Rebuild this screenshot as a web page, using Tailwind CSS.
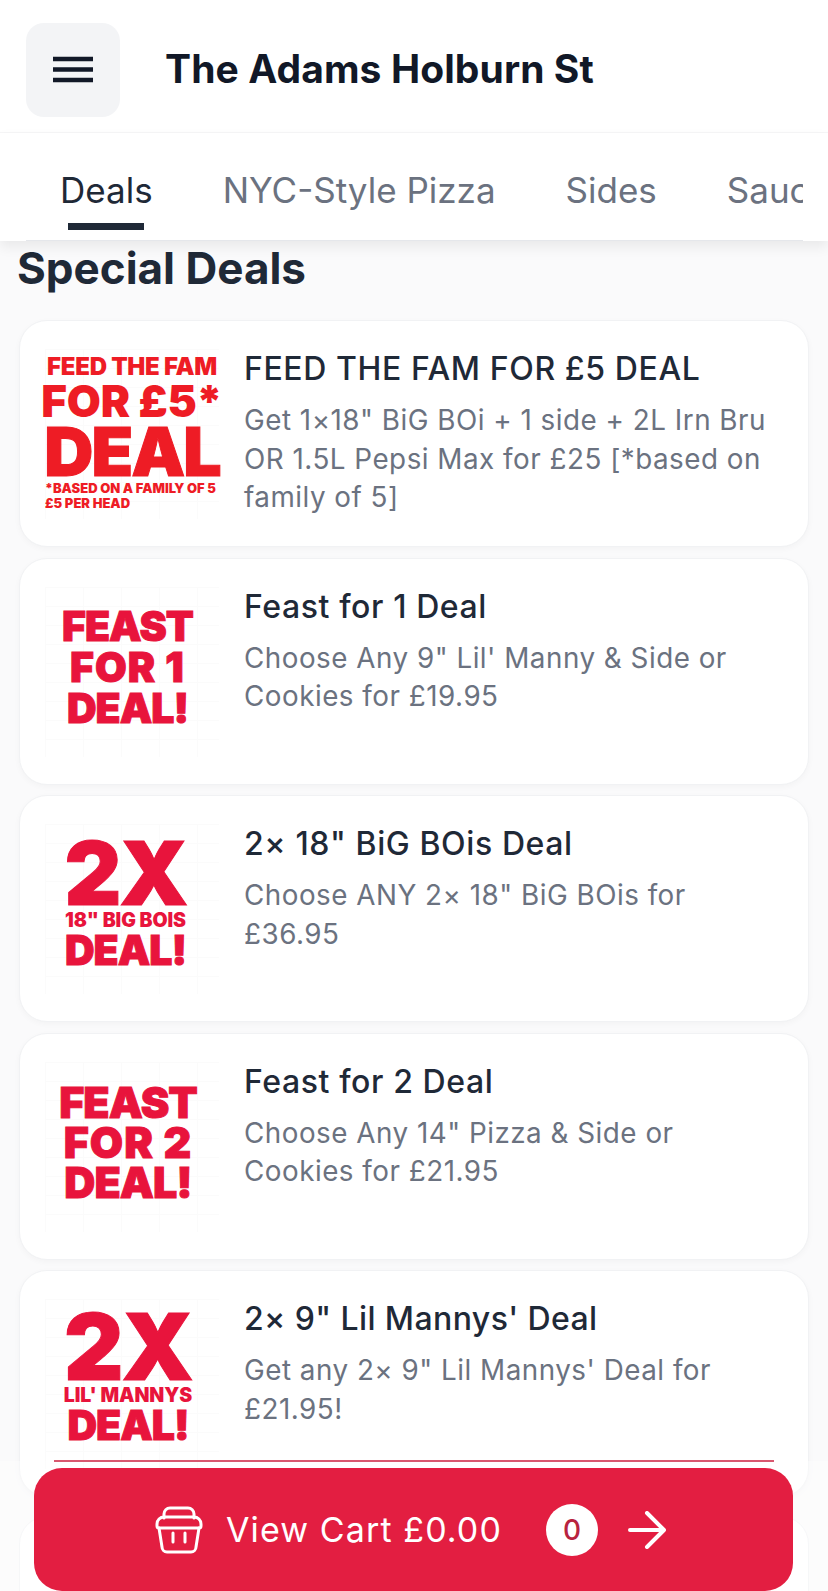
<!DOCTYPE html>
<html><head><meta charset="utf-8"><script src="https://cdn.jsdelivr.net/npm/@tailwindcss/browser@4"></script></head>
<body class="m-0">
<div class="relative w-[828px] h-[1591px] overflow-hidden bg-[#fafafb] font-['Inter','Liberation_Sans',sans-serif]">
  <header class="h-[133px] bg-white flex items-start pt-[23px] pl-[26px] border-b border-[#f6f6f7]">
    <button class="w-[94px] h-[94px] rounded-[18px] bg-[#f3f4f6] flex items-center justify-center">
      <svg width="40" height="28" viewBox="0 0 40 28"><path d="M0 3h40M0 13.500h40M0 24h40" stroke="#111827" stroke-width="4.500"/></svg>
    </button>
    <h1 class="ml-[45px] mt-[24px] text-[39px] leading-[44px] font-bold text-[#111827] tracking-[0.1px]">The Adams Holburn St</h1>
  </header>
  <nav class="relative z-10 h-[108px] bg-white shadow-[0_6px_12px_rgba(0,0,0,0.07)] px-[26px]">
    <div class="h-[108px] w-[777px] overflow-hidden flex text-[35px] leading-[40px] text-[#6b7280] whitespace-nowrap border-b border-[#e5e7eb] pl-[34px] gap-[70px]">
      <div class="relative shrink-0 pt-[37px] text-[#1f2937]">Deals<span class="absolute left-[8px] right-[9px] top-[90px] h-[7px] bg-[#1f2937]"></span></div>
      <div class="shrink-0 pt-[37px]">NYC-Style Pizza</div>
      <div class="shrink-0 pt-[37px]">Sides</div>
      <div class="shrink-0 pt-[37px]">Sauces</div>
    </div>
  </nav>
  <main class="px-[19px]">
    <h2 class="-ml-[2px] h-[79px] pt-[3px] text-[44px] leading-[48px] font-bold text-[#1f2937]">Special Deals</h2>
    <div class="flex flex-col gap-[10.500px]">
      <article class="h-[227px] rounded-[28px] bg-white border border-[#f1f2f4] shadow-[0_2px_6px_rgba(0,0,0,0.03)] flex pl-[25px] pr-[18px]">
        <div class="w-[174px] h-[170px] my-[28px] shrink-0 flex flex-col items-center pt-[5px] font-black text-[#ee1c25] whitespace-nowrap bg-[linear-gradient(#fbfbfb_1px,transparent_1px),linear-gradient(90deg,#fbfbfb_1px,transparent_1px)] bg-[length:38px_19px]">
          <div class="text-[24px] leading-[26px] tracking-[-0.3px]">FEED THE FAM</div>
          <div class="text-[44px] leading-[40px] mt-[1px] tracking-[-0.2px]">FOR £5*</div>
          <div class="text-[68px] leading-[54px] mt-[3px] tracking-[-2px] [-webkit-text-stroke:1px_#ee1c25]">DEAL</div>
          <div class="w-full text-[13px] leading-[15px] mt-[3px] tracking-[0px]">*BASED ON A FAMILY OF 5</div>
          <div class="w-full text-[13px] leading-[15px] tracking-[0px]">£5 PER HEAD</div>
        </div>
        <div class="ml-[25px] pt-[26px]">
          <h3 class="text-[32px] leading-[44px] font-[550] text-[#1f2937] tracking-[0.6px]">FEED THE FAM FOR £5 DEAL</h3>
          <p class="mt-[10px] text-[27.800px] leading-[38.500px] text-[#6b7280] tracking-[0.5px]">Get 1×18" BiG BOi + 1 side + 2L Irn Bru OR 1.5L Pepsi Max for £25 [*based on family of 5]</p>
        </div>
      </article>
      <article class="h-[227px] rounded-[28px] bg-white border border-[#f1f2f4] shadow-[0_2px_6px_rgba(0,0,0,0.03)] flex pl-[25px] pr-[18px]">
        <div class="w-[174px] h-[170px] my-[28px] shrink-0 flex flex-col items-center pt-[19px] pr-[9px] font-black text-[#e8143c] whitespace-nowrap text-[41px] leading-[41px] tracking-[-1px] [-webkit-text-stroke:1px_#e8143c] bg-[linear-gradient(#fbfbfb_1px,transparent_1px),linear-gradient(90deg,#fbfbfb_1px,transparent_1px)] bg-[length:38px_19px]">
          <div>FEAST</div><div class="tracking-[1px]">FOR 1</div><div>DEAL!</div>
        </div>
        <div class="ml-[25px] pt-[26px]">
          <h3 class="text-[32px] leading-[44px] font-[550] text-[#1f2937] tracking-[0.6px]">Feast for 1 Deal</h3>
          <p class="mt-[10px] text-[27.800px] leading-[38.500px] text-[#6b7280] tracking-[0.5px]">Choose Any 9" Lil' Manny &amp; Side or Cookies for £19.95</p>
        </div>
      </article>
      <article class="h-[227px] rounded-[28px] bg-white border border-[#f1f2f4] shadow-[0_2px_6px_rgba(0,0,0,0.03)] flex pl-[25px] pr-[18px]">
        <div class="w-[174px] h-[170px] my-[28px] shrink-0 flex flex-col items-center pt-[13px] pr-[13px] font-black text-[#e8143c] whitespace-nowrap [-webkit-text-stroke:1px_#e8143c] bg-[linear-gradient(#fbfbfb_1px,transparent_1px),linear-gradient(90deg,#fbfbfb_1px,transparent_1px)] bg-[length:38px_19px]">
          <div class="text-[88px] leading-[73px] tracking-[-2px]">2X</div>
          <div class="text-[19.500px] leading-[21px] tracking-[-0.1px] [-webkit-text-stroke:0]">18" BIG BOIS</div>
          <div class="text-[41px] leading-[38px] tracking-[-1px]">DEAL!</div>
        </div>
        <div class="ml-[25px] pt-[26px] pr-[90px]">
          <h3 class="text-[32px] leading-[44px] font-[550] text-[#1f2937] tracking-[0.6px] whitespace-nowrap">2× 18" BiG BOis Deal</h3>
          <p class="mt-[10px] text-[27.800px] leading-[38.500px] text-[#6b7280] tracking-[0.5px]">Choose ANY 2× 18" BiG BOis for £36.95</p>
        </div>
      </article>
      <article class="h-[227px] rounded-[28px] bg-white border border-[#f1f2f4] shadow-[0_2px_6px_rgba(0,0,0,0.03)] flex pl-[25px] pr-[18px]">
        <div class="w-[174px] h-[170px] my-[28px] shrink-0 flex flex-col items-center pt-[20px] pr-[8px] font-black text-[#e8143c] whitespace-nowrap text-[43px] leading-[40px] tracking-[-1px] [-webkit-text-stroke:1px_#e8143c] bg-[linear-gradient(#fbfbfb_1px,transparent_1px),linear-gradient(90deg,#fbfbfb_1px,transparent_1px)] bg-[length:38px_19px]">
          <div>FEAST</div><div class="tracking-[1px]">FOR 2</div><div>DEAL!</div>
        </div>
        <div class="ml-[25px] pt-[26px] pr-[90px]">
          <h3 class="text-[32px] leading-[44px] font-[550] text-[#1f2937] tracking-[0.6px] whitespace-nowrap">Feast for 2 Deal</h3>
          <p class="mt-[10px] text-[27.800px] leading-[38.500px] text-[#6b7280] tracking-[0.5px]">Choose Any 14" Pizza &amp; Side or Cookies for £21.95</p>
        </div>
      </article>
      <article class="h-[227px] rounded-[28px] bg-white border border-[#f1f2f4] shadow-[0_2px_6px_rgba(0,0,0,0.03)] flex pl-[25px] pr-[18px]">
        <div class="w-[174px] h-[170px] my-[28px] shrink-0 flex flex-col items-center pt-[9px] pr-[8px] font-black text-[#e8143c] whitespace-nowrap [-webkit-text-stroke:1px_#e8143c] bg-[linear-gradient(#fbfbfb_1px,transparent_1px),linear-gradient(90deg,#fbfbfb_1px,transparent_1px)] bg-[length:38px_19px]">
          <div class="text-[92px] leading-[77px] tracking-[-2px]">2X</div>
          <div class="text-[19.500px] leading-[21px] tracking-[-0.1px] [-webkit-text-stroke:0]">LIL' MANNYS</div>
          <div class="text-[41px] leading-[38px] tracking-[-1px]">DEAL!</div>
        </div>
        <div class="ml-[25px] pt-[26px]">
          <h3 class="text-[32px] leading-[44px] font-[550] text-[#1f2937] tracking-[0.4px]">2× 9" Lil Mannys' Deal</h3>
          <p class="mt-[10px] text-[27.800px] leading-[38.500px] text-[#6b7280] tracking-[0.5px]">Get any 2× 9" Lil Mannys' Deal for £21.95!</p>
        </div>
      </article>
      <article class="h-[227px] mt-[8px] rounded-[28px] bg-white border border-[#f1f2f4]"></article>
    </div>
  </main>
  <div class="absolute left-0 top-[1461px] w-[828px] h-[130px] bg-white/40"></div>
  <div class="absolute left-[54px] top-[1460px] w-[720px] h-[2px] bg-[#d8586f]"></div>
  <button class="absolute left-[34px] top-[1468px] w-[759px] h-[123px] rounded-[28px] bg-[#e31e41] flex items-center justify-center text-white">
    <svg class="-ml-[6px]" width="48" height="48" viewBox="0 0 48 48" fill="none" stroke="#fff" stroke-width="3" stroke-linecap="round" stroke-linejoin="round"><path d="M9 12V8a6 6 0 0 1 6-6h18a6 6 0 0 1 6 6v4"/><path d="M9 11h30a7 7 0 0 1 7 7v2a2 2 0 0 1-2 2H4a2 2 0 0 1-2-2v-2a7 7 0 0 1 7-7z"/><path d="M4 22l3 19a5 5 0 0 0 5 5h24a5 5 0 0 0 5-5l3-19"/><path d="M18 27v9M30 27v9"/></svg>
    <span class="ml-[23px] text-[34px] leading-[40px] tracking-[1.100px]">View Cart £0.00</span>
    <span class="ml-[44px] w-[52px] h-[52px] rounded-full bg-white text-[#b8233f] flex items-center justify-center text-[28px] font-medium">0</span>
    <svg class="ml-[30px]" width="38" height="38" viewBox="0 0 38 38" fill="none" stroke="#fff" stroke-width="4" stroke-linecap="round" stroke-linejoin="round"><path d="M2 19h33M19 2l17 17-17 17"/></svg>
  </button>
</div>
</body></html>
